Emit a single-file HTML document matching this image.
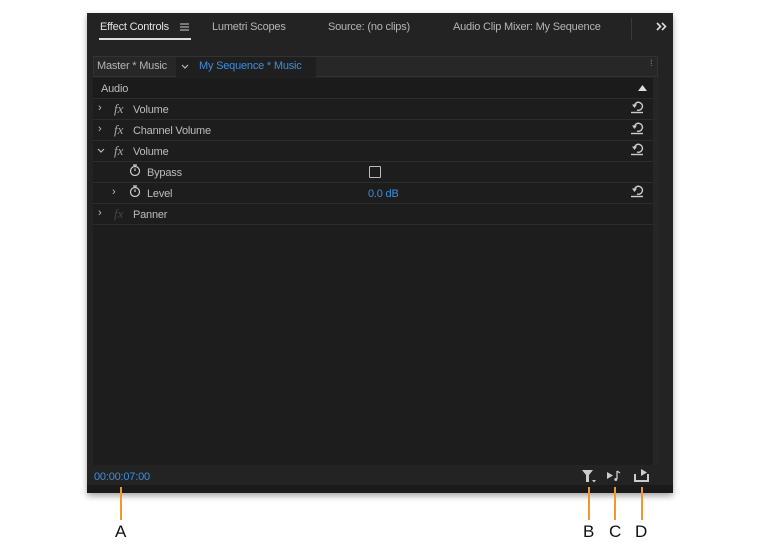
<!DOCTYPE html>
<html><head><style>
body{margin:0;width:760px;height:548px;background:#fff;position:relative;font-family:"Liberation Sans",sans-serif;overflow:hidden}
.p{position:absolute;left:87px;top:13px;width:586px;height:480px;background:#232323;box-shadow:0 3px 6px rgba(0,0,0,.35)}
.a{position:absolute;font-size:11px;color:#b5b5b5;white-space:nowrap;letter-spacing:-0.2px}
.row{position:absolute;left:93px;width:560px;height:20px;border-bottom:1px solid #2c2c2c;background:#1d1d1d}
.t{position:absolute;font-size:11px;color:#bdbdbd;white-space:nowrap;line-height:14px;letter-spacing:-0.2px}
.fx{position:absolute;font-family:"Liberation Serif",serif;font-style:italic;font-size:13px;color:#aaa}
.rs{position:absolute;left:631px}
.sw{position:absolute;left:129px}
.ol{position:absolute;width:2px;background:#f0962a;top:487px;height:33px}
.lb{position:absolute;top:522px;font-size:17px;color:#111}
</style></head><body>
<div class="p"></div>
<div class="a" style="left:100px;top:21px;color:#e4e4e4">Effect Controls</div>
<svg style="position:absolute;left:180px;top:23px" width="9" height="8"><path d="M0 1h9M0 4h9M0 7h9" stroke="#ccc" stroke-width="1"/></svg>
<div style="position:absolute;left:99px;top:38px;width:92px;height:2px;background:#ddd"></div>
<div class="a" style="left:212px;top:21px">Lumetri Scopes</div>
<div class="a" style="left:328px;top:21px">Source: (no clips)</div>
<div class="a" style="left:453px;top:21px">Audio Clip Mixer: My Sequence</div>
<div style="position:absolute;left:631px;top:18px;width:1px;height:22px;background:#3a3a3a"></div>
<svg style="position:absolute;left:656px;top:22px" width="11" height="9"><path d="M1 1l3.5 3.5L1 8M6 1l3.5 3.5L6 8" stroke="#ddd" stroke-width="1.6" fill="none"/></svg>
<div style="position:absolute;left:93px;top:56px;width:565px;height:21px;background:#272727;border:1px solid #333;box-sizing:border-box"></div>
<div class="a" style="left:97px;top:60px">Master * Music</div>
<div style="position:absolute;left:176px;top:57px;width:140px;height:20px;background:#1f1f1f"></div>
<svg style="position:absolute;left:181px;top:64px" width="8" height="5"><path d="M1 1l3 3 3-3" stroke="#bbb" stroke-width="1.2" fill="none"/></svg>
<div class="a" style="left:199px;top:60px;color:#3b8fe0">My Sequence * Music</div>
<div class="a" style="left:650px;top:58px;font-size:9px;color:#888">⁞</div>
<div style="position:absolute;left:93px;top:78px;width:560px;height:387px;background:#1d1d1d"></div>
<div style="position:absolute;left:653px;top:78px;width:5px;height:387px;background:#262626"></div>
<div class="row" style="top:78px;background:#1b1b1b"></div><div class="t" style="left:101px;top:82px">Audio</div>
<svg style="position:absolute;left:638px;top:85px" width="9" height="6"><path d="M0 6L4.5 0 9 6z" fill="#ddd"/></svg>
<div class="row" style="top:99px"></div>
<div class="row" style="top:120px"></div>
<div class="row" style="top:141px"></div>
<div class="row" style="top:162px"></div>
<div class="row" style="top:183px"></div>
<div class="row" style="top:204px"></div>
<svg width="0" height="0" style="position:absolute"><defs>
<g id="r"><path d="M3.5 5.5A4 4 0 1 1 6 10" stroke="#ccc" stroke-width="1.4" fill="none"/><path d="M1 4.5h5L3.5 8z" fill="#ccc"/><path d="M0 12.5h12" stroke="#ccc" stroke-width="1.4"/></g>
<g id="s"><circle cx="6" cy="7" r="4.5" stroke="#ccc" stroke-width="1.2" fill="none"/><path d="M4 1h4M6 1v2M6 7V4.5" stroke="#ccc" stroke-width="1.2"/></g>
</defs></svg>
<div class="t" style="left:98px;top:101px">›</div><div class="fx" style="left:114px;top:101px">fx</div><div class="t" style="left:133px;top:103px">Volume</div><svg class="rs" style="top:100px" width="13" height="14"><use href="#r"/></svg>
<div class="t" style="left:98px;top:122px">›</div><div class="fx" style="left:114px;top:122px">fx</div><div class="t" style="left:133px;top:124px">Channel Volume</div><svg class="rs" style="top:121px" width="13" height="14"><use href="#r"/></svg>
<svg style="position:absolute;left:97px;top:148px" width="8" height="5"><path d="M1 1l3 3 3-3" stroke="#bbb" stroke-width="1.2" fill="none"/></svg><div class="fx" style="left:114px;top:143px">fx</div><div class="t" style="left:133px;top:145px">Volume</div><svg class="rs" style="top:142px" width="13" height="14"><use href="#r"/></svg>
<svg class="sw" style="top:164px" width="12" height="12"><use href="#s"/></svg><div class="t" style="left:147px;top:166px">Bypass</div>
<div style="position:absolute;left:369px;top:166px;width:10px;height:10px;border:1.5px solid #bbb;border-radius:1px"></div>
<div class="t" style="left:112px;top:185px">›</div><svg class="sw" style="top:185px" width="12" height="12"><use href="#s"/></svg><div class="t" style="left:147px;top:187px">Level</div>
<div class="t" style="left:368px;top:187px;color:#3b8fe0">0.0 dB</div><svg class="rs" style="top:184px" width="13" height="14"><use href="#r"/></svg>
<div class="t" style="left:98px;top:206px">›</div><div class="fx" style="left:114px;top:206px;color:#444">fx</div><div class="t" style="left:133px;top:208px">Panner</div>
<div class="a" style="left:94px;top:471px;color:#3b8fe0">00:00:07:00</div>
<svg style="position:absolute;left:582px;top:470px" width="15" height="14"><path d="M0 0h11L7 5v7H4V5z" fill="#ccc"/><path d="M10 10h4l-2 2.5z" fill="#ccc"/></svg>
<svg style="position:absolute;left:607px;top:470px" width="16" height="12"><path d="M0 2l6 3.5L0 9z" fill="#ccc"/><path d="M10 1v8M10 1l3 2" stroke="#ccc" stroke-width="1.3" fill="none"/><circle cx="8.8" cy="9.5" r="1.5" fill="#ccc"/></svg>
<svg style="position:absolute;left:634px;top:469px" width="16" height="13"><path d="M1 5v7h13V5" stroke="#ccc" stroke-width="2" fill="none"/><path d="M7 0l6 3.5L7 7z" fill="#ccc"/></svg>
<div style="position:absolute;left:87px;top:485px;width:586px;height:8px;background:#1a1a1a"></div>
<div class="ol" style="left:120px"></div><div class="lb" style="left:115px">A</div>
<div class="ol" style="left:588px"></div><div class="lb" style="left:583px">B</div>
<div class="ol" style="left:614px"></div><div class="lb" style="left:609px">C</div>
<div class="ol" style="left:641px"></div><div class="lb" style="left:635px">D</div>
</body></html>
